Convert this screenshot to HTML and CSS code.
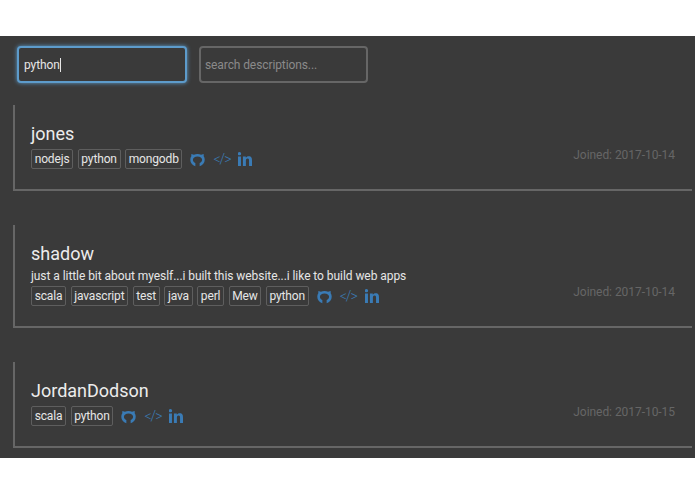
FILE: index.html
```html
<!DOCTYPE html>
<html lang="en">
<head>
<meta charset="utf-8">
<title>Users</title>
<link rel="stylesheet" href="styles.css">
</head>
<body>
<svg class="defs" width="0" height="0" aria-hidden="true">
  <symbol id="gh" viewBox="0 0 16 16">
    <path d="M5.700 15.200C2.500 14.200 .3 11.500 .3 8.200c0-1.300.4-2.600 1.100-3.600V2l2.800.8C5.300 2.300 6.600 2 8 2s2.700.3 3.800.8l2.800-.8v2.600c.7 1 1.100 2.300 1.100 3.600 0 3.300-2.200 6-5.400 7v-3.600c1.500-.5 2.600-1.800 2.600-3.400 0-2-2-3.400-4.900-3.400S3.100 6.200 3.100 8.200c0 1.600 1.100 2.900 2.600 3.400z"/>
  </symbol>
  <symbol id="in" viewBox="1 .8 14.200 14.200">
    <path d="M1 5.300h3v9.700H1zM2.500.8a1.700 1.700 0 1 1 0 3.400 1.700 1.700 0 0 1 0-3.400zM6 5.300h2.900v1.400c.5-.9 1.600-1.600 3-1.600 2.800 0 3.300 1.800 3.300 4.300V15h-3v-5c0-1.200 0-2.500-1.500-2.500S9 8.600 9 10v5H6z"/>
  </symbol>
</svg>
<main class="panel">
  <form class="search">
    <div class="field field-active"><span class="typed">python</span></div>
    <input class="field" type="text" placeholder="search descriptions..." aria-label="search descriptions">
  </form>

  <section class="card">
    <div class="info">
      <h2 class="name">jones</h2>
      <div class="tags">
        <span class="tag">nodejs</span><span class="tag">python</span><span class="tag">mongodb</span>
        <span class="links">
          <svg class="icon"><use href="#gh"/></svg>
          <span class="code">&lt;/&gt;</span>
          <svg class="icon icon-in"><use href="#in"/></svg>
        </span>
      </div>
    </div>
    <p class="joined">Joined: 2017-10-14</p>
  </section>

  <section class="card">
    <div class="info">
      <h2 class="name">shadow</h2>
      <p class="bio">just a little bit about myeslf...i built this website...i like to build web apps</p>
      <div class="tags">
        <span class="tag">scala</span><span class="tag">javascript</span><span class="tag">test</span><span class="tag">java</span><span class="tag">perl</span><span class="tag">Mew</span><span class="tag">python</span>
        <span class="links">
          <svg class="icon"><use href="#gh"/></svg>
          <span class="code">&lt;/&gt;</span>
          <svg class="icon icon-in"><use href="#in"/></svg>
        </span>
      </div>
    </div>
    <p class="joined">Joined: 2017-10-14</p>
  </section>

  <section class="card">
    <div class="info">
      <h2 class="name">JordanDodson</h2>
      <div class="tags">
        <span class="tag">scala</span><span class="tag">python</span>
        <span class="links">
          <svg class="icon"><use href="#gh"/></svg>
          <span class="code">&lt;/&gt;</span>
          <svg class="icon icon-in"><use href="#in"/></svg>
        </span>
      </div>
    </div>
    <p class="joined">Joined: 2017-10-15</p>
  </section>
</main>
</body>
</html>
```
FILE: styles.css
```css
* { box-sizing: border-box; }
html, body { margin: 0; background: #fff; }
body { padding-top: 36px; height: 494px; overflow: hidden; font-family: Roboto, "Liberation Sans", sans-serif; }
.defs { position: absolute; }
.panel { background: #3a3a3a; height: 422px; padding: 10px 3px 0 13px; display: flex; flex-direction: column; }
.search { display: flex; gap: 13px; padding-left: 4px; margin-bottom: 22px; }
.field { width: 169px; height: 37px; padding: 0 4px; background: #3a3a3a; border: 2px solid #666; border-radius: 4px; color: #e6e6e6; font: 12px Roboto, sans-serif; letter-spacing: -.1px; outline: none; }
.field::placeholder { color: #8a8a8a; opacity: 1; }
.field-active { display: flex; align-items: center; padding-left: 5px; width: 170px; border-color: #5d9bcb; box-shadow: 0 0 4px #5d9bcb; margin-right: -1px; }
.typed { border-right: 1px solid #e6e6e6; line-height: 14px; }
.card { display: flex; justify-content: space-between; align-items: flex-end; border-left: 2px solid #666; border-bottom: 2px solid #666; padding: 18px 17px 20px 16px; margin-bottom: 34px; }
.info { display: flex; flex-direction: column; }
.name { margin: 0 0 5px; font-size: 18px; font-weight: 400; line-height: 21px; color: #ececec; }
.bio { margin: 0 0 3px; font-size: 12px; letter-spacing: -.06px; line-height: 14px; color: #e6e6e6; }
.tags { display: flex; align-items: center; gap: 4.500px; }
.tag { height: 20px; padding: 0 2.700px; border: 1px solid #5e5e5e; border-radius: 2px; font-size: 12px; letter-spacing: -.15px; line-height: 18px; color: #e6e6e6; }
.links { display: flex; align-items: center; gap: 8px; margin-left: 3.500px; color: #3a7bb5; }
.icon { width: 15px; height: 15px; fill: currentColor; display: block; }
.icon-in { width: 14px; height: 14px; }
.code { font-size: 14px; line-height: 15px; font-weight: 300; letter-spacing: -1px; }
.joined { margin: 0 0 7px; font-size: 12px; letter-spacing: -.05px; line-height: 14px; color: #666; }
```
